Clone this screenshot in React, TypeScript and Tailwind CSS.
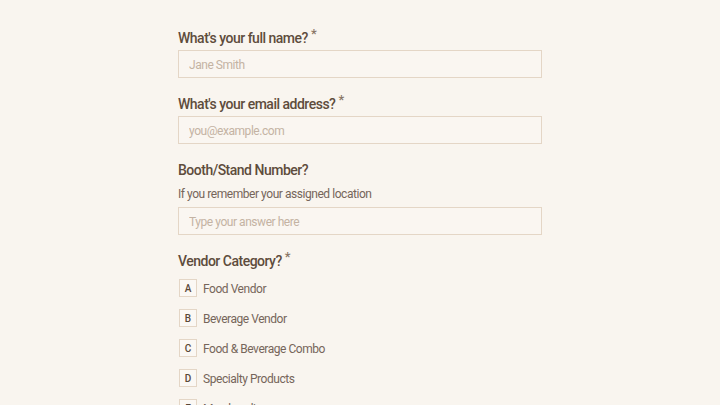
const options = [
  { key: "A", label: "Food Vendor" },
  { key: "B", label: "Beverage Vendor" },
  { key: "C", label: "Food & Beverage Combo" },
  { key: "D", label: "Specialty Products" },
  { key: "E", label: "Merchandise" },
];

function Label({ text, required }: { text: string; required?: boolean }) {
  return (
    <div className="h-5 text-[14px] leading-5 font-medium tracking-[-0.5px] text-[#5e4c3c]">
      {text}
      {required && <span className="relative -top-[5px] ml-[3px] text-[13px] text-[#8a7766]">*</span>}
    </div>
  );
}

function TextInput({ placeholder }: { placeholder: string }) {
  return (
    <input
      type="text"
      placeholder={placeholder}
      className="block h-7 w-full border border-[#e4d6c6] bg-[#faf6f1] px-[10px] pt-[2px] text-[12px] tracking-[-0.45px] text-[#5a4838] placeholder:text-[#c4b3a3] outline-none"
    />
  );
}

export default function App() {
  return (
    <div
      className="h-[405px] w-full overflow-hidden bg-[#f9f5ef]"
      style={{ fontFamily: "Roboto, 'Noto Sans', sans-serif" }}
    >
      <div className="mx-auto w-[364px] pt-7">
        <Label text="What's your full name?" required />
        <div className="mt-[2px]">
          <TextInput placeholder="Jane Smith" />
        </div>

        <div className="mt-4">
          <Label text="What's your email address?" required />
          <div className="mt-[2px]">
            <TextInput placeholder="you@example.com" />
          </div>
        </div>

        <div className="mt-4">
          <Label text="Booth/Stand Number?" />
          <div className="mt-[6px] h-4 text-[12px] leading-4 tracking-[-0.45px] text-[#76655a]">
            If you remember your assigned location
          </div>
          <div className="mt-[5px]">
            <TextInput placeholder="Type your answer here" />
          </div>
        </div>

        <div className="mt-4">
          <Label text="Vendor Category?" required />
          <div className="mt-2 flex flex-col gap-3">
            {options.map((o) => (
              <div key={o.key} className="flex h-[18px] items-center gap-[6px]">
                <div className="ml-[1px] flex h-[18px] w-[18px] items-center justify-center border border-[#e4d6c6] bg-[#fbf8f4] text-[10px] font-medium text-[#5a4838]">
                  {o.key}
                </div>
                <span className="pt-[1px] text-[12px] leading-4 tracking-[-0.45px] text-[#76655a]">{o.label}</span>
              </div>
            ))}
          </div>
        </div>
      </div>
    </div>
  );
}
